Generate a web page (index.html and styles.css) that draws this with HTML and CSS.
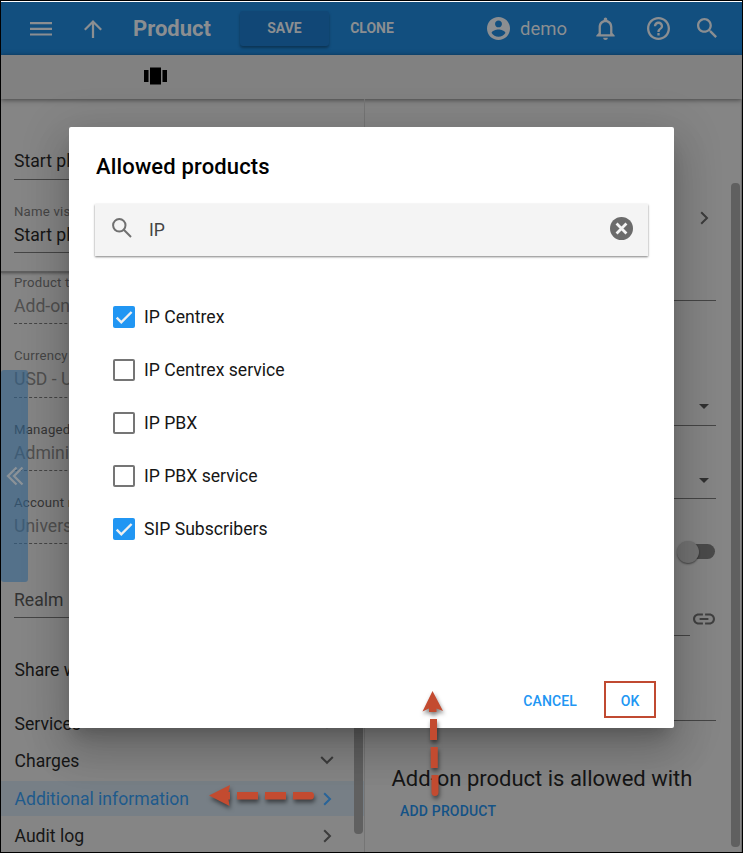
FILE: index.html
```html
<!DOCTYPE html>
<html lang="en">
<head>
<meta charset="utf-8">
<title>Product</title>
<link rel="stylesheet" href="styles.css">
</head>
<body>
<div class="app">
  <header class="header">
    <svg class="ico menu" viewBox="0 0 22 16"><path d="M0 1h22v2.2H0zM0 6.7h22v2.2H0zM0 12.4h22v2.2H0z"/></svg>
    <svg class="ico up" viewBox="4 4 16 16"><path d="M4 12l1.41 1.41L11 7.83V20h2V7.83l5.58 5.59L20 12l-8-8z"/></svg>
    <h1 class="title">Product</h1>
    <button class="btn save">SAVE</button>
    <button class="btn clone">CLONE</button>
    <div class="user">
      <svg class="ico" viewBox="2 2 20 20"><path d="M12 2C6.48 2 2 6.48 2 12s4.48 10 10 10 10-4.48 10-10S17.52 2 12 2zm0 3c1.66 0 3 1.34 3 3s-1.34 3-3 3-3-1.340-3-3 1.340-3 3-3zm0 14.200c-2.500 0-4.710-1.280-6-3.220.030-1.990 4-3.080 6-3.080 1.990 0 5.970 1.090 6 3.080-1.290 1.940-3.500 3.220-6 3.220z"/></svg>
      <span>demo</span>
    </div>
    <svg class="ico bell" viewBox="4 2 16 20"><path d="M12 22c1.100 0 2-.9 2-2h-4c0 1.100.9 2 2 2zm6-6v-5c0-3.070-1.630-5.640-4.500-6.320V4c0-.83-.67-1.500-1.500-1.500s-1.500.67-1.500 1.500v.68C7.640 5.360 6 7.920 6 11v5l-2 2v1h16v-1l-2-2zm-2 1H8v-6c0-2.480 1.510-4.500 4-4.500s4 2.020 4 4.500v6z"/></svg>
    <svg class="ico help" viewBox="2 2 20 20"><path d="M11 18h2v-2h-2v2zm1-16C6.480 2 2 6.480 2 12s4.480 10 10 10 10-4.480 10-10S17.520 2 12 2zm0 18c-4.410 0-8-3.590-8-8s3.590-8 8-8 8 3.590 8 8-3.590 8-8 8zm0-14c-2.210 0-4 1.790-4 4h2c0-1.100.9-2 2-2s2 .9 2 2c0 2-3 1.750-3 5h2c0-2.250 3-2.500 3-5 0-2.210-1.790-4-4-4z"/></svg>
    <svg class="ico find" viewBox="3 3 17.500 17.500"><path d="M15.500 14h-.79l-.28-.27C15.410 12.590 16 11.110 16 9.500 16 5.910 13.090 3 9.500 3S3 5.910 3 9.500 5.910 16 9.500 16c1.610 0 3.090-.59 4.230-1.570l.27.28v.79l5 4.990L20.490 19l-4.990-5zm-6 0C7.010 14 5 11.990 5 9.500S7.010 5 9.500 5 14 7.010 14 9.500 11.990 14 9.500 14z"/></svg>
  </header>
  <div class="toolbar">
    <svg class="carousel" viewBox="0 0 23 18"><path d="M0 3h4.500v12H0zM6 .5h11v17H6zM18.500 3H23v12h-4.500z"/></svg>
  </div>
  <main class="columns">
    <section class="left">
      <div class="pinned">
        <div class="field first"><span class="value">Start pl</span></div>
        <div class="field second"><label>Name vis</label><span class="value">Start pl</span></div>
      </div>
      <div class="field off third"><label>Product ty</label><span class="value">Add-on</span></div>
      <div class="field off tall"><label>Currency</label><span class="value">USD - U</span></div>
      <div class="field off"><label class="dark">Managed</label><span class="value">Adminis</span></div>
      <div class="field off"><label class="dark">Account r</label><span class="value">Univers</span></div>
      <div class="field tall realm"><span class="value">Realm</span></div>
      <div class="share">Share w</div>
      <nav class="menu-list">
        <a class="item">Services<svg class="chev" viewBox="0 0 14 14"><path d="M1.500 4.500L7 10l5.500-5.500"/></svg></a>
        <a class="item">Charges<svg class="chev" viewBox="0 0 14 14"><path d="M1.200 3L7 8.800 12.800 3"/></svg></a>
        <a class="item active">Additional information<svg class="chev" viewBox="0 0 14 14"><path d="M4.200 1.200L10 7l-5.800 5.800"/></svg></a>
        <a class="item">Audit log<svg class="chev" viewBox="0 0 14 14"><path d="M4.200 1.200L10 7l-5.800 5.800"/></svg></a>
      </nav>
      <div class="handle"><svg viewBox="0 0 18 20"><path d="M10.500 1.500L2 10l8.500 8.500M16.500 1.500L8 10l8.500 8.500"/></svg></div>
      <div class="bar bar-left"></div>
    </section>
    <section class="right">
      <div class="line r1"><svg class="chev" viewBox="0 0 14 14"><path d="M4.200 1.200L10 7l-5.800 5.800"/></svg></div>
      <div class="line r2"><i class="caret"></i></div>
      <div class="line r3"><i class="caret"></i></div>
      <div class="toggle-row"><span class="toggle"></span></div>
      <div class="link-row">
        <div class="short"></div>
        <svg class="link" viewBox="2 7 20 10"><path d="M3.900 12c0-1.710 1.390-3.100 3.100-3.100h4V7H7c-2.760 0-5 2.240-5 5s2.240 5 5 5h4v-1.900H7c-1.710 0-3.100-1.390-3.100-3.100zM8 13h8v-2H8v2zm9-6h-4v1.900h4c1.710 0 3.100 1.390 3.100 3.100s-1.390 3.100-3.100 3.100h-4V17h4c2.760 0 5-2.240 5-5s-2.240-5-5-5z"/></svg>
      </div>
      <div class="line r4"></div>
      <h2 class="subhead">Add-on product is allowed with</h2>
      <button class="btn add">ADD PRODUCT</button>
      <div class="bar bar-right"></div>
    </section>
  </main>

  <div class="dialog">
    <h2 class="dialog-title">Allowed products</h2>
    <div class="search">
      <svg class="s-ico" viewBox="0 0 20 20"><circle cx="7.300" cy="7.300" r="6.200"/><path d="M11.800 11.800L19 19"/></svg>
      <span class="query">IP</span>
      <svg class="clear" viewBox="2 2 20 20"><circle cx="12" cy="12" r="10"/><path d="M7.700 7.700l8.600 8.600M16.300 7.700l-8.600 8.600"/></svg>
    </div>
    <ul class="options">
      <li><span class="check on"><svg viewBox="0 0 22 22"><path d="M3.700 11.700l4.600 4.600L18.600 6"/></svg></span><span>IP Centrex</span></li>
      <li><span class="check"></span><span>IP Centrex service</span></li>
      <li><span class="check"></span><span>IP PBX</span></li>
      <li><span class="check"></span><span>IP PBX service</span></li>
      <li><span class="check on"><svg viewBox="0 0 22 22"><path d="M3.700 11.700l4.600 4.600L18.600 6"/></svg></span><span>SIP Subscribers</span></li>
    </ul>
    <div class="actions">
      <button class="btn cancel">CANCEL</button>
      <button class="btn ok">OK</button>
    </div>
  </div>

  <svg class="arrow arrow-h" viewBox="0 0 110 26"><path d="M1 12.500L22 2l-1.500 7H22v7.500h-1.500L21.500 23zM29 9h21v7.500H29zM57 9h21v7.500H57zM85 9h18q3 0 3 3.750t-3 3.750H85z"/></svg>
  <svg class="arrow arrow-v" viewBox="0 0 26 112"><path d="M11.500 1L22 21l-6.500-2.500V22H8v-3.500L1.500 21.500zM9 29h7v21H9zM9.600 57h7.200v21H9.800zM10.500 85h7v17q0 4-3.500 4t-3.500-4z"/></svg>
</div>
</body>
</html>
```
FILE: styles.css
```css
* { box-sizing: border-box; }
body { margin: 0; font-family: Roboto, sans-serif; font-size: 17.6px; line-height: 20px; color: #161616; }
h1, h2, ul { margin: 0; padding: 0; font-weight: 400; }
button { border: 0; background: none; padding: 0; font-family: inherit; cursor: pointer; }
svg { display: block; flex: none; }

.app {
  position: relative;
  width: 743px;
  height: 853px;
  border: 1px solid #000;
  overflow: hidden;
  background: #858585;
  display: flex;
  flex-direction: column;
}

.header {
  height: 54px;
  flex: none;
  border-top: 1px solid #fff;
  background: #124f7f;
  color: #8b8e91;
  display: flex;
  align-items: center;
}
.ico { fill: #8b8e91; }
.menu { width: 22px; height: 16px; margin-left: 29px; }
.up { width: 18px; height: 18px; margin-left: 32px; margin-top: 1px; }
.title { margin-left: 31px; width: 107px; font-size: 22px; font-weight: 700; line-height: 26px; letter-spacing: 0; }
.btn { font-size: 14px; font-weight: 500; line-height: 20px; }
.save {
  width: 89px;
  height: 35px;
  margin-top: -1px;
  border-radius: 3px;
  background: #114776;
  color: #8b8e91;
  font-weight: 700;
  box-shadow: 0 2px 3px rgba(0, 0, 0, .35);
}
.clone { margin-left: 20px; width: 46px; margin-top: -1px; color: #8b8e91; font-weight: 700; white-space: nowrap; }
.user { display: flex; align-items: center; gap: 10px; margin-left: 92px; width: 109px; font-size: 18.500px; }
.user .ico { width: 23px; height: 23px; }
.bell { width: 19px; height: 23px; }
.help { width: 23px; height: 23px; margin-left: 32px; }
.find { width: 20px; height: 20px; margin-left: 27px; margin-top: -1px; }

.toolbar {
  position: relative;
  height: 44px;
  flex: none;
  background: #818181;
  box-shadow: 0 1px 5px rgba(0, 0, 0, .5);
  display: flex;
  padding: 12px 0 0 143px;
}
.carousel { width: 23px; height: 18px; }

.columns { flex: 1; display: flex; min-height: 0; }
.left { position: relative; width: 364px; flex: none; border-right: 1px solid #757575; overflow: hidden; }
.pinned { height: 174px; border-bottom: 2px solid #5f5f5f; box-shadow: 0 1px 2px rgba(0, 0, 0, .25); }
.field {
  height: 73px;
  margin-left: 13px;
  width: 320px;
  border-bottom: 1px solid #454545;
  padding-bottom: 7px;
  display: flex;
  flex-direction: column;
  justify-content: flex-end;
}
.field label { font-size: 13.200px; line-height: 16px; margin-bottom: 5px; color: #454545; letter-spacing: .2px; }
.field label.dark { color: #363636; }
.first { height: 81px; padding-bottom: 8px; }
.third { height: 51px; }
.tall { height: 74px; }
.off { border-bottom: 1px dashed #454545; }
.off.tall { padding-bottom: 8px; }
.off .value { color: #505050; }
.realm .value { color: #333; }
.share { height: 88px; padding: 42px 0 0 13.500px; }
.menu-list { display: flex; flex-direction: column; gap: 2.500px; }
.item { height: 35px; flex: none; padding: 0 30.500px 0 13.500px; display: flex; align-items: center; justify-content: space-between; }
.chev { width: 14px; height: 14px; fill: none; stroke: #3c3c3c; stroke-width: 2; }
.active { background: #777f86; color: #1e5a8c; }
.active .chev { stroke: #286499; }
.handle {
  position: absolute;
  left: 0;
  top: 271px;
  width: 27px;
  height: 212px;
  border-radius: 3px;
  background: rgba(52, 100, 142, .6);
  display: flex;
  align-items: center;
  padding-left: 5px;
}
.handle svg { width: 18px; height: 20px; fill: none; stroke: #8b9298; stroke-width: 2.300; }
.bar { position: absolute; width: 9px; border-radius: 4px; background: #606060; }
.bar-left { right: 1px; top: 480px; height: 255px; }
.bar-right { right: 1px; top: 84px; height: 664px; }

.right { position: relative; flex: 1; border-right: 1px solid #6e6e6e; padding-left: 26px; }
.line { width: 325px; border-bottom: 1px solid #454545; display: flex; justify-content: flex-end; align-items: flex-end; }
.r1 { height: 202px; padding: 0 5px 75px 0; }
.r2 { height: 125px; padding: 0 7px 16px 0; }
.r3 { height: 73px; padding: 0 7px 15px 0; }
.r4 { height: 85px; }
.caret { border: 5.500px solid transparent; border-top-color: #303030; border-bottom: 0; }
.toggle-row { height: 105px; width: 324px; display: flex; justify-content: flex-end; align-items: center; }
.toggle { position: relative; width: 34px; height: 15px; border-radius: 8px; background: #4a4a4a; }
.toggle::before {
  content: "";
  position: absolute;
  left: -4px;
  top: -3px;
  width: 22px;
  height: 22px;
  border-radius: 50%;
  background: #737373;
  box-shadow: 0 1px 2px rgba(0, 0, 0, .5);
}
.link-row { height: 32px; display: flex; gap: 2.500px; }
.short { width: 299px; border-bottom: 1px solid #454545; }
.link { width: 22px; height: 12px; margin-top: 9px; fill: #404040; }
.subhead { margin-top: 45px; padding-left: .5px; font-size: 22px; line-height: 26px; letter-spacing: 0; white-space: nowrap; }
.add { margin: 9px 0 0 9px; color: #145286; display: block; letter-spacing: .18px; }

.dialog {
  position: absolute;
  left: 68px;
  top: 126px;
  width: 605px;
  height: 601px;
  border-radius: 2px;
  background: #fff;
  padding: 26px 26px 0 26px;
  box-shadow: 0 11px 15px -7px rgba(0, 0, 0, .2), 0 24px 38px 3px rgba(0, 0, 0, .14), 0 9px 46px 8px rgba(0, 0, 0, .12);
  display: flex;
  flex-direction: column;
}
.dialog-title { font-size: 22px; font-weight: 500; line-height: 28px; padding-left: 1px; color: #000; letter-spacing: .15px; }
.search {
  height: 52px;
  margin-top: 23px;
  background: #f4f4f4;
  box-shadow: 0 1px 2px rgba(0, 0, 0, .5);
  display: flex;
  align-items: center;
  padding: 0 15px 0 17px;
}
.s-ico { width: 20px; height: 20px; margin-top: -4px; fill: none; stroke: #707070; stroke-width: 2; }
.query { flex: 1; margin-left: 17px; color: #444; }
.clear { width: 23px; height: 23px; margin-top: -3px; fill: #6b6b6b; stroke: #f4f4f4; stroke-width: 2.400; }
.clear circle { stroke: none; }
.options { list-style: none; margin-top: 34px; padding-left: 18px; }
.options li { height: 53px; display: flex; align-items: center; gap: 9px; }
.check { width: 22px; height: 22px; border: 2px solid #757575; border-radius: 2px; }
.check.on { border: 0; background: #2196f3; }
.check svg { width: 22px; height: 22px; fill: none; stroke: #f0f0f0; stroke-width: 2.400; }
.actions { margin: auto -8px 10px 0; display: flex; justify-content: flex-end; align-items: center; gap: 27px; }
.cancel { padding-top: 2px; color: #2196f3; letter-spacing: .12px; }
.ok { width: 52px; height: 37px; padding-top: 2px; border: 2px solid #c04a31; color: #2196f3; }

.arrow { position: absolute; fill: #c34b30; filter: drop-shadow(1px 3px 2px rgba(0, 0, 0, .5)); overflow: visible; }
.arrow-h { left: 207px; top: 782px; width: 110px; height: 26px; }
.arrow-v { left: 420px; top: 689px; width: 26px; height: 112px; }
```
